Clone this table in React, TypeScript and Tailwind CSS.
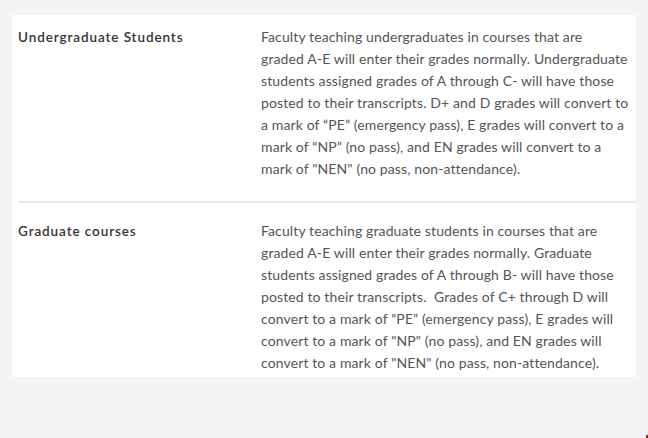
const ROWS = [
  {
    label: 'Undergraduate Students',
    lines: [
      'Faculty teaching undergraduates in courses that are',
      'graded A-E will enter their grades normally. Undergraduate',
      'students assigned grades of A through C- will have those',
      'posted to their transcripts. D+ and D grades will convert to',
      'a mark of “PE” (emergency pass), E grades will convert to a',
      'mark of “NP” (no pass), and EN grades will convert to a',
      'mark of "NEN" (no pass, non-attendance).',
    ],
  },
  {
    label: 'Graduate courses',
    lines: [
      'Faculty teaching graduate students in courses that are',
      'graded A-E will enter their grades normally. Graduate',
      'students assigned grades of A through B- will have those',
      'posted to their transcripts.\u00a0 Grades of C+ through D will',
      'convert to a mark of “PE” (emergency pass), E grades will',
      'convert to a mark of "NP" (no pass), and EN grades will',
      'convert to a mark of "NEN" (no pass, non-attendance).',
    ],
  },
];

export default function App() {
  return (
    <div className="relative w-[648px] h-[438px] bg-[#f4f4f4] pt-[15px] pl-[12px] font-['Lato',sans-serif]">
      <div className="w-[624px] bg-white pl-[6px] pb-[3px]">
        {ROWS.map((row, i) => (
          <div key={row.label}>
            {i > 0 && <div className="h-[2px] bg-[#e8e8e8]" />}
            <div className={`flex ${i === 0 ? 'pt-[11px] pb-[21px]' : 'pt-[17px]'}`}>
              <div className="w-[243px] shrink-0 text-[13.5px] leading-[22px] font-semibold tracking-[0.9px] text-[#333333]">
                {row.label}
              </div>
              <p className="flex-1 text-[14px] leading-[22px] tracking-[0.12px] text-[#555555]">
                {row.lines.map((line) => (
                  <span key={line} className="block whitespace-nowrap">
                    {line}
                  </span>
                ))}
              </p>
            </div>
          </div>
        ))}
      </div>
      <div className="absolute right-0 bottom-0 w-[2px] h-[3px] bg-[#d0021b]" />
    </div>
  );
}
